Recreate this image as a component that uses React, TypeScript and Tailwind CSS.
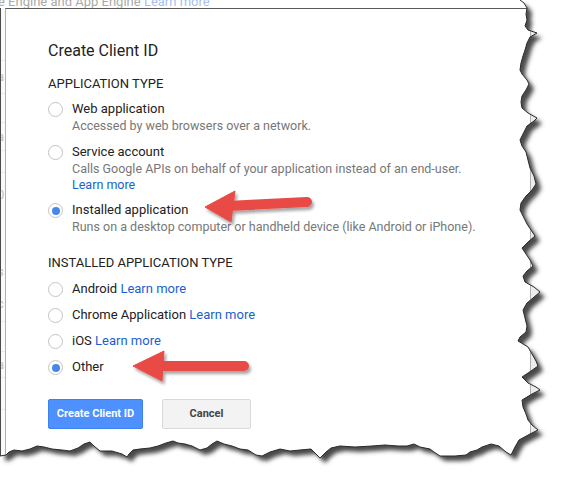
import React from "react";

// right torn edge, top to bottom, then bottom edge right to left
const rightEdge: [number, number][] = [
  [520, 0], [524, 3], [527, 8], [526, 14], [527, 20], [525, 26], [528, 30], [537, 33], [530, 37],
  [527, 43], [525, 50], [523, 56], [521, 63], [520, 70], [522, 74], [527, 80], [529, 84], [526, 90],
  [522, 96], [521, 102], [522, 108], [528, 113], [537, 118], [534, 121], [527, 126], [524, 132],
  [520, 140], [522, 146], [526, 152], [528, 160], [530, 168], [534, 176], [536, 184], [532, 190],
  [526, 196], [521, 203], [520, 210], [523, 216], [527, 224], [531, 230], [535, 236], [528, 242],
  [522, 248], [526, 254], [530, 260], [533, 266], [527, 271], [523, 276], [525, 282], [534, 287],
  [540, 292], [533, 298], [527, 303], [523, 310], [525, 318], [527, 326], [526, 332], [520, 337],
  [518, 341], [523, 344], [528, 347], [532, 354], [536, 361], [538, 366], [531, 371], [522, 377],
  [528, 383], [536, 387], [540, 390], [532, 394], [522, 400], [523, 407], [526, 414], [528, 420],
  [532, 425], [538, 430], [530, 434], [519, 440], [515, 447], [511, 455],
];
const bottomEdge: [number, number][] = [
  [506, 452], [499, 446], [491, 444], [482, 447], [477, 450], [470, 452], [466, 455], [455, 456],
  [440, 456], [434, 452], [430, 449], [420, 447], [414, 444], [407, 446], [398, 446], [385, 445],
  [372, 446], [355, 447], [340, 446], [331, 448], [326, 452], [320, 458], [316, 454], [311, 449],
  [300, 450], [290, 451], [280, 449], [270, 452], [262, 456], [256, 455], [248, 450], [240, 449],
  [232, 446], [224, 444], [217, 441], [212, 444], [207, 448], [200, 450], [192, 446], [185, 444],
  [178, 443], [173, 441], [166, 443], [158, 446], [150, 448], [140, 449], [133, 450], [129, 454],
  [127, 457], [122, 454], [112, 451], [100, 451], [94, 446], [90, 442], [84, 444], [78, 448],
  [70, 451], [62, 450], [52, 449], [44, 447], [37, 446], [30, 449], [22, 451], [14, 450], [9, 452],
  [6, 455], [0, 456],
];

const edgePts = [...rightEdge, ...bottomEdge];
const edgeLine = "M" + edgePts.map((p) => p.join(" ")).join(" L");
const tornShape = "M0 0 L" + edgePts.map((p) => p.join(" ")).join(" L") + " Z";
const outside = "M-20 -20 H600 V520 H-20 Z " + tornShape;

const TornEdge = () => (
  <svg className="pointer-events-none absolute inset-0" width="565" height="485" viewBox="0 0 565 485">
    <defs>
      <clipPath id="outside">
        <path d={outside} clipRule="evenodd" />
      </clipPath>
      <filter id="blur" x="-10%" y="-10%" width="120%" height="120%">
        <feGaussianBlur stdDeviation="2.2" />
      </filter>
    </defs>
    <path d={outside} fill="#fff" fillRule="evenodd" />
    <g clipPath="url(#outside)">
      <path d={tornShape} transform="translate(5 5)" fill="#4a4a4a" filter="url(#blur)" />
    </g>
    <path d={edgeLine} fill="none" stroke="#2b2b2b" strokeWidth="1" />
  </svg>
);

const Arrows = () => (
  <svg className="pointer-events-none absolute inset-0" width="565" height="485" viewBox="0 0 565 485">
    <defs>
      <filter id="arrowShadow" x="-20%" y="-40%" width="140%" height="180%">
        <feDropShadow dx="2" dy="3" stdDeviation="1.6" floodColor="#000" floodOpacity="0.35" />
      </filter>
    </defs>
    <g fill="#e84b45" stroke="#e84b45" filter="url(#arrowShadow)">
      <line x1="228" y1="206" x2="307" y2="202" strokeWidth="10" strokeLinecap="round" />
      <polygon points="205,207 235,191 231,222" strokeWidth="1" strokeLinejoin="round" />
      <line x1="158" y1="366" x2="244" y2="366" strokeWidth="10" strokeLinecap="round" />
      <polygon points="133,366 164,351 162,381" strokeWidth="1" strokeLinejoin="round" />
    </g>
  </svg>
);

const Radio = ({ checked = false }: { checked?: boolean }) => (
  <span className="mt-[1px] flex h-[15px] w-[15px] shrink-0 items-center justify-center rounded-full border border-[#c4c4c4] bg-white">
    {checked && <span className="h-[8px] w-[8px] rounded-full bg-[#4787ed]" />}
  </span>
);

const LearnMore = () => <span className="text-[#1a5fd0]">Learn more</span>;

// faded page content peeking out at the left of the dialog
const leftBits = [
  { h: 34, ch: "" },
  { h: 19, ch: "l", blue: true, line: true },
  { h: 33, ch: "a", line: true },
  { h: 29, ch: "", line: true },
  { h: 28, ch: "a", line: true },
  { h: 22, ch: "", line: true },
  { h: 44, ch: "0" },
  { h: 40, ch: "l", blue: true },
  { h: 30, ch: "s" },
  { h: 35, ch: "c", line: true },
  { h: 30, ch: "", line: true },
  { h: 26, ch: "a", line: true },
  { h: 32, ch: "", line: true },
];

export default function App() {
  return (
    <div className="relative h-[485px] w-[565px] overflow-hidden bg-white font-['Roboto','Liberation_Sans',sans-serif]">
      <div className="flex h-[470px] w-[545px] flex-col">
        <div className="h-[8px] shrink-0 overflow-hidden whitespace-nowrap">
          <div className="-ml-[2px] -mt-[6px] text-[13px] leading-[16px] text-[#a9a9a9]">
            e Engine and App Engine <span className="text-[#a6bfec]">Learn more</span>
          </div>
        </div>
        <div className="flex flex-1">
          <div className="flex w-[5px] shrink-0 flex-col overflow-hidden border-l border-[#4a4a4a] bg-[#fafafa]">
            {leftBits.map((b, i) => (
              <div
                key={i}
                className={`flex shrink-0 items-center overflow-hidden ${b.line ? "border-b border-[#ececec]" : ""}`}
                style={{ height: b.h }}
              >
                <span className={`-ml-[4px] text-[13px] leading-[14px] ${b.blue ? "text-[#b4c6e8]" : "text-[#c2c2c2]"}`}>
                  {b.ch}
                </span>
              </div>
            ))}
          </div>
          <div className="w-[526px] shrink-0 border-x border-t border-x-[#b0b0b0] border-t-[#5a5a5a] bg-white pl-[42px] pt-[32px]">
            <h1 className="text-[16px] leading-[20px] text-[#222]">Create Client ID</h1>
            <div className="mt-[15px] text-[13px] leading-[16px] text-[#222]">APPLICATION TYPE</div>

            <div className="mt-[9px] flex gap-[9px]">
              <Radio />
              <div>
                <div className="text-[13px] leading-[16px] text-[#222]">Web application</div>
                <div className="mt-[1px] text-[12.5px] leading-[16px] text-[#777]">
                  Accessed by web browsers over a network.
                </div>
              </div>
            </div>
            <div className="mt-[10px] flex gap-[9px]">
              <Radio />
              <div>
                <div className="text-[13px] leading-[16px] text-[#222]">Service account</div>
                <div className="mt-[1px] text-[12.5px] leading-[16px] text-[#777]">
                  Calls Google APIs on behalf of your application instead of an end-user.
                  <br />
                  <LearnMore />
                </div>
              </div>
            </div>
            <div className="mt-[9px] flex gap-[9px]">
              <Radio checked />
              <div>
                <div className="text-[13px] leading-[16px] text-[#222]">Installed application</div>
                <div className="mt-[1px] text-[12.5px] leading-[16px] text-[#777]">
                  Runs on a desktop computer or handheld device (like Android or iPhone).
                </div>
              </div>
            </div>

            <div className="mt-[20px] text-[13px] leading-[16px] text-[#222]">INSTALLED APPLICATION TYPE</div>
            <div className="mt-[10px] flex flex-col gap-[10px] text-[13px] leading-[16px] text-[#222]">
              <div className="flex gap-[9px]">
                <Radio />
                <span>
                  Android <LearnMore />
                </span>
              </div>
              <div className="flex gap-[9px]">
                <Radio />
                <span>
                  Chrome Application <LearnMore />
                </span>
              </div>
              <div className="flex gap-[9px]">
                <Radio />
                <span>
                  iOS <LearnMore />
                </span>
              </div>
              <div className="flex gap-[9px]">
                <Radio checked />
                <span>Other</span>
              </div>
            </div>

            <div className="mt-[24px] flex gap-[19px]">
              <button className="h-[30px] w-[95px] rounded-[2px] border border-[#3b82ee] bg-[#4d90fe] text-[11px] font-bold text-white">
                Create Client ID
              </button>
              <button className="h-[30px] w-[89px] rounded-[2px] border border-[#d9d9d9] bg-[#f3f3f3] text-[11px] font-bold text-[#444]">
                Cancel
              </button>
            </div>
          </div>
          <div className="flex-1 bg-[#ececec]" />
        </div>
      </div>
      <TornEdge />
      <Arrows />
    </div>
  );
}
